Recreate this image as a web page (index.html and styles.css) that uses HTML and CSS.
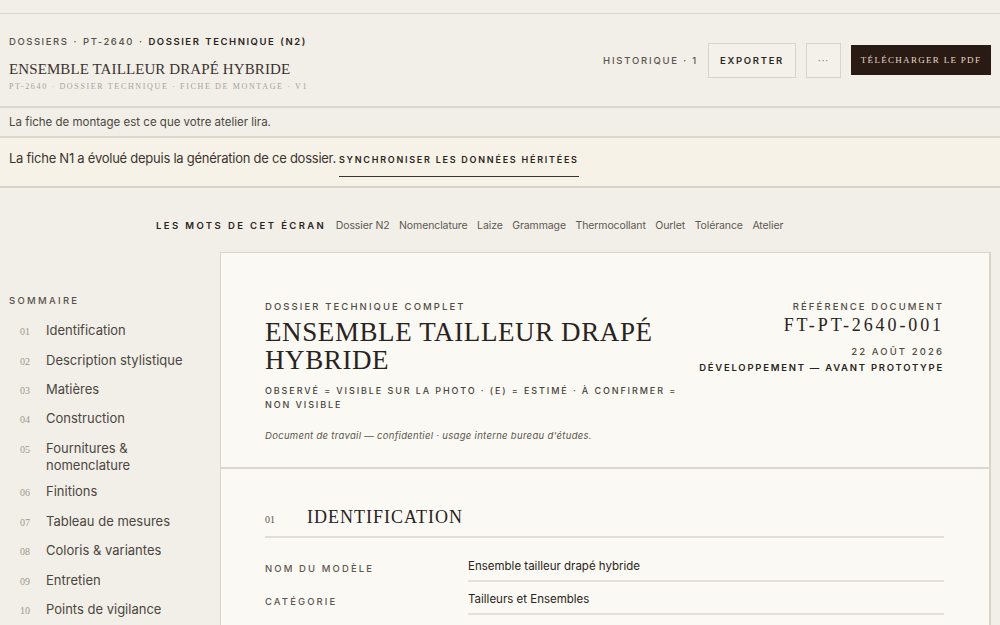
FILE: index.html
```html
<!DOCTYPE html>
<html lang="fr">
<head>
    <meta charset="UTF-8">
    <meta name="viewport" content="width=device-width, initial-scale=1.0">
    <title>Dossier technique — PT-2640</title>
    <link rel="stylesheet" href="styles.css">
</head>
<body>
    <div class="top-strip"></div>

    <header class="head">
        <div class="head-left">
            <div class="crumbs">DOSSIERS · PT-2640 · <b>DOSSIER TECHNIQUE (N2)</b></div>
            <h1 class="head-title">ENSEMBLE TAILLEUR DRAPÉ HYBRIDE</h1>
            <div class="head-sub">PT-2640 · DOSSIER TECHNIQUE · FICHE DE MONTAGE · V1</div>
        </div>
        <div class="head-actions">
            <span class="history">HISTORIQUE · 1</span>
            <button class="btn">EXPORTER</button>
            <button class="btn btn-more">···</button>
            <button class="btn-dark">TÉLÉCHARGER LE PDF</button>
        </div>
    </header>

    <div class="note-bar">La fiche de montage est ce que votre atelier lira.</div>

    <div class="sync-bar">
        <span>La fiche N1 a évolué depuis la génération de ce dossier.</span>
        <a class="sync-link">SYNCHRONISER LES DONNÉES HÉRITÉES</a>
    </div>

    <nav class="words">
        <b>LES MOTS DE CET ÉCRAN</b>
        <span>Dossier N2</span>
        <span>Nomenclature</span>
        <span>Laize</span>
        <span>Grammage</span>
        <span>Thermocollant</span>
        <span>Ourlet</span>
        <span>Tolérance</span>
        <span>Atelier</span>
    </nav>

    <div class="layout">
        <aside class="summary">
            <div class="summary-title">SOMMAIRE</div>
            <ol class="summary-list">
                <li><span class="num">01</span><span class="txt">Identification</span></li>
                <li><span class="num">02</span><span class="txt">Description stylistique</span></li>
                <li><span class="num">03</span><span class="txt">Matières</span></li>
                <li><span class="num">04</span><span class="txt">Construction</span></li>
                <li class="two-lines"><span class="num">05</span><span class="txt">Fournitures &amp; nomenclature</span></li>
                <li><span class="num">06</span><span class="txt">Finitions</span></li>
                <li><span class="num">07</span><span class="txt">Tableau de mesures</span></li>
                <li><span class="num">08</span><span class="txt">Coloris &amp; variantes</span></li>
                <li><span class="num">09</span><span class="txt">Entretien</span></li>
                <li><span class="num">10</span><span class="txt">Points de vigilance</span></li>
            </ol>
        </aside>

        <main class="doc">
            <section class="doc-head">
                <div class="doc-head-left">
                    <div class="label">DOSSIER TECHNIQUE COMPLET</div>
                    <h2 class="doc-title">ENSEMBLE TAILLEUR DRAPÉ HYBRIDE</h2>
                    <div class="legend">OBSERVÉ = VISIBLE SUR LA PHOTO · (E) = ESTIMÉ · À CONFIRMER = NON VISIBLE</div>
                    <p class="confid">Document de travail — confidentiel · usage interne bureau d'études.</p>
                </div>
                <div class="doc-head-right">
                    <div class="label">RÉFÉRENCE DOCUMENT</div>
                    <div class="doc-ref">FT-PT-2640-001</div>
                    <div class="label date">22 AOÛT 2026</div>
                    <div class="label stage">DÉVELOPPEMENT — AVANT PROTOTYPE</div>
                </div>
            </section>

            <section class="doc-section">
                <div class="section-head">
                    <span class="num">01</span>
                    <h3>IDENTIFICATION</h3>
                </div>
                <div class="field">
                    <div class="label">NOM DU MODÈLE</div>
                    <div class="value">Ensemble tailleur drapé hybride</div>
                </div>
                <div class="field">
                    <div class="label">CATÉGORIE</div>
                    <div class="value">Tailleurs et Ensembles</div>
                </div>
            </section>
        </main>
    </div>
</body>
</html>
```

FILE: styles.css
```css
/* palette: papier, crème, encre */
html {
    font-family: Inter, "Noto Sans", sans-serif;
    color: #2a2420;
}
body {
    margin: 0;
    background-color: #f2efe8;
}
h1, h2, h3, p {
    margin: 0;
    font-weight: normal;
}

.top-strip {
    height: 13px;
    border-bottom: 1px solid #dbd7ce;
}

/* header */
.head {
    display: flex;
    justify-content: space-between;
    align-items: center;
    padding: 0 9px;
    height: 92px;
    border-bottom: 2px solid #dcd8cf;
}
.head-left {
    padding-top: 7px;
}
.crumbs {
    font-size: 9.5px;
    letter-spacing: 1.55px;
    word-spacing: 1px;
    color: #57524b;
    font-weight: 500;
    line-height: 14px;
}
.crumbs b {
    color: #2a2420;
    font-weight: 600;
}
.head-title {
    font-family: "Liberation Serif", serif;
    font-size: 15px;
    letter-spacing: 0.1px;
    line-height: 18px;
    margin-top: 11px;
    color: #3a332e;
}
.head-sub {
    font-family: "Liberation Serif", serif;
    font-size: 8px;
    letter-spacing: 1.65px;
    line-height: 12px;
    margin-top: 3px;
    color: #a7a29a;
}
.head-actions {
    display: flex;
    align-items: center;
    gap: 10px;
}
.history {
    font-size: 9.5px;
    letter-spacing: 1.8px;
    color: #5a554e;
    font-weight: 500;
}
.btn {
    height: 35px;
    padding: 0 11px;
    background-color: #f4f1ea;
    border: 1px solid #d9d4ca;
    font-family: Inter, sans-serif;
    font-size: 9.5px;
    font-weight: 600;
    letter-spacing: 1.7px;
    color: #2e2823;
    cursor: pointer;
}
.btn-more {
    width: 35px;
    padding: 0;
    letter-spacing: 1px;
    font-weight: 400;
    color: #8a847b;
}
.btn-dark {
    height: 30px;
    width: 140px;
    border: none;
    background-color: #2a1a14;
    color: #e6d9c8;
    font-family: "Liberation Serif", serif;
    font-size: 9px;
    letter-spacing: 1.3px;
    cursor: pointer;
}

/* bandeaux */
.note-bar {
    font-size: 11.5px;
    line-height: 28px;
    padding: 0 9px;
    color: #4b463f;
    border-bottom: 2px solid #dcd8cf;
}
.sync-bar {
    display: flex;
    align-items: baseline;
    gap: 3px;
    padding: 12px 9px 9px;
    background-color: #f7f2e7;
    border-bottom: 2px solid #d8d3c9;
    font-size: 13px;
    line-height: 17px;
    color: #3b3530;
    letter-spacing: -0.25px;
}
.sync-link {
    font-size: 9px;
    font-weight: 600;
    letter-spacing: 1.75px;
    color: #2a2420;
    padding-bottom: 8px;
    border-bottom: 1px solid #3a342e;
    cursor: pointer;
}

/* lexique */
.words {
    display: flex;
    align-items: baseline;
    gap: 9.5px;
    padding: 31px 0 19px 156px;
    font-size: 10.5px;
    letter-spacing: -0.1px;
    line-height: 14px;
    color: #5d5851;
}
.words b {
    font-size: 9.5px;
    font-weight: 600;
    letter-spacing: 2.4px;
    color: #2a2420;
}

.layout {
    display: flex;
    align-items: flex-start;
}

/* sommaire */
.summary {
    width: 211px;
    flex-shrink: 0;
    padding: 43px 0 0 9px;
}
.summary-title {
    font-size: 9.5px;
    font-weight: 500;
    letter-spacing: 2.3px;
    color: #57524b;
    line-height: 12px;
    margin-bottom: 9px;
}
.summary-list {
    list-style: none;
    margin: 0;
    padding: 0 0 0 11px;
}
.summary-list li {
    display: flex;
    align-items: baseline;
    padding: 6.2px 0;
    font-size: 13px;
    line-height: 17px;
    color: #4b4640;
}
.summary-list li.two-lines {
    padding-bottom: 3.5px;
}
.summary-list .num {
    width: 26px;
    flex-shrink: 0;
    font-family: "Liberation Serif", serif;
    font-size: 10px;
    line-height: 10px;
    color: #9d978d;
}
.summary-list .txt {
    max-width: 150px;
}

/* document */
.doc {
    flex: 1;
    margin-right: 9px;
    padding-bottom: 40px;
    background-color: #fbf9f3;
    border: 1px solid #d9d5cb;
    border-right-width: 2px;
}
.label {
    font-size: 9.5px;
    font-weight: 500;
    letter-spacing: 2.1px;
    line-height: 12px;
    color: #524d46;
}
.doc-head {
    display: flex;
    justify-content: space-between;
    align-items: flex-start;
    padding: 48px 45px 26px 44px;
    border-bottom: 2px solid #dbd7ce;
}
.doc-head-left {
    width: 425px;
}
.doc-title {
    font-family: "Liberation Serif", serif;
    font-size: 27px;
    letter-spacing: 0.6px;
    line-height: 28px;
    margin-top: 5px;
    color: #2a221e;
}
.legend {
    font-size: 9px;
    font-weight: 500;
    letter-spacing: 1.9px;
    line-height: 14px;
    margin-top: 10px;
    color: #48433d;
}
.confid {
    font-size: 9.5px;
    font-style: italic;
    letter-spacing: 0.3px;
    margin-top: 18px;
    color: #5a554e;
}
.doc-head-right {
    text-align: right;
}
.doc-ref {
    font-family: "Liberation Serif", serif;
    font-size: 18px;
    letter-spacing: 2.9px;
    line-height: 22px;
    margin-top: 1px;
    color: #2a221e;
}
.date {
    margin-top: 10px;
}
.stage {
    margin-top: 4px;
    font-weight: 600;
    letter-spacing: 1.75px;
    color: #2a2420;
}

.doc-section {
    padding: 37px 45px 0 44px;
}
.section-head {
    display: flex;
    align-items: baseline;
    padding-bottom: 8px;
    border-bottom: 2px solid #e2ded5;
}
.section-head .num {
    width: 42px;
    font-family: "Liberation Serif", serif;
    font-size: 10px;
    color: #5a544c;
}
.section-head h3 {
    font-family: "Liberation Serif", serif;
    font-size: 18px;
    letter-spacing: 1px;
    line-height: 22px;
    color: #2a221e;
}
.field {
    display: grid;
    grid-template-columns: 203px 1fr;
    align-items: center;
    padding-top: 21px;
}
.field + .field {
    padding-top: 10px;
}
.field .value {
    font-size: 11.5px;
    line-height: 14px;
    padding-bottom: 7px;
    border-bottom: 2px solid #e4e0d7;
    color: #2a2420;
}
.field .label {
    margin-top: -4px;
    color: #5d5851;
}
```
